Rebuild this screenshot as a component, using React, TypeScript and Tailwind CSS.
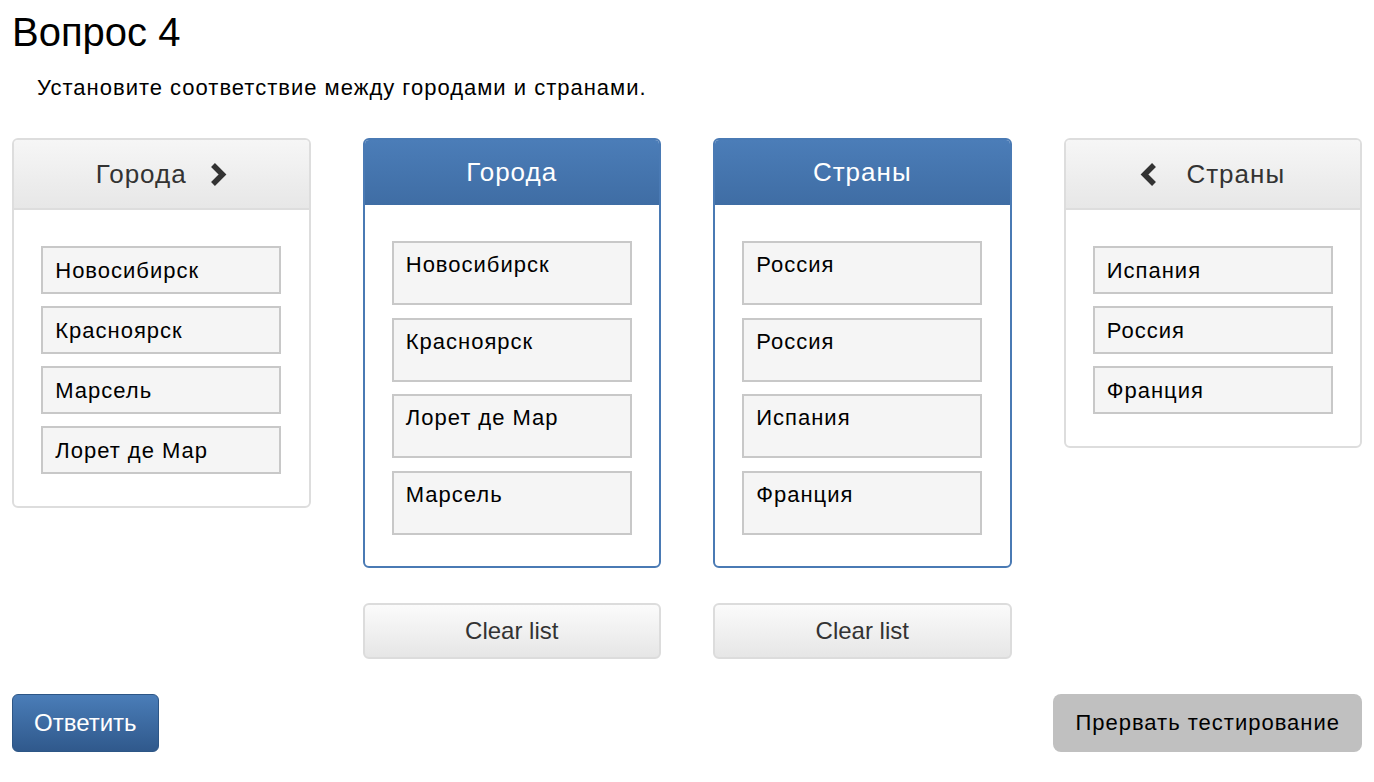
import React from 'react';

const sourceCities = ['Новосибирск', 'Красноярск', 'Марсель', 'Лорет де Мар'];
const pickedCities = ['Новосибирск', 'Красноярск', 'Лорет де Мар', 'Марсель'];
const pickedCountries = ['Россия', 'Россия', 'Испания', 'Франция'];
const sourceCountries = ['Испания', 'Россия', 'Франция'];

function Chevron({ dir }: { dir: 'left' | 'right' }) {
  const points = dir === 'right' ? '4,3 13.5,12.5 4,22' : '14,3 4.5,12.5 14,22';
  return (
    <svg width="18" height="25" viewBox="0 0 18 25" className="shrink-0">
      <polyline points={points} fill="none" stroke="#333" strokeWidth="5.5" strokeLinejoin="miter" />
    </svg>
  );
}

// список-источник (серый заголовок, короткие элементы)
function SourcePanel({ title, items, dir }: { title: string; items: string[]; dir: 'left' | 'right' }) {
  return (
    <div className="rounded-md border-2 border-[#dddddd] bg-white overflow-hidden">
      <div className="h-[70px] flex items-center justify-center bg-gradient-to-b from-[#f6f6f6] to-[#e7e7e7] border-b-2 border-[#dddddd] text-[26px] tracking-[1px] text-[#333]">
        {dir === 'left' && <span className="mr-[28px] flex"><Chevron dir="left" /></span>}
        <span>{title}</span>
        {dir === 'right' && <span className="ml-[22px] flex"><Chevron dir="right" /></span>}
      </div>
      <div className="flex flex-col items-center gap-[12px] pt-[36px] pb-[32px]">
        {items.map((item, i) => (
          <div key={i} className="w-[240px] h-[48px] border-2 border-[#c8c8c8] bg-[#f5f5f5] px-[12px] flex items-center text-[22px] tracking-[1px] text-black">
            {item}
          </div>
        ))}
      </div>
    </div>
  );
}

// целевой список (синий заголовок, высокие элементы)
function TargetPanel({ title, items }: { title: string; items: string[] }) {
  return (
    <div className="rounded-md border-2 border-[#4a7ab4] bg-white overflow-hidden">
      <div className="h-[65px] flex items-center justify-center bg-gradient-to-b from-[#4b7db8] to-[#3f6da4] text-[26px] tracking-[1px] text-white">
        {title}
      </div>
      <div className="flex flex-col items-center gap-[12.5px] pt-[36px] pb-[31px]">
        {items.map((item, i) => (
          <div key={i} className="w-[240px] h-[64px] border-2 border-[#c8c8c8] bg-[#f5f5f5] px-[12px] pt-[9px] text-[22px] leading-[26px] tracking-[1px] text-black">
            {item}
          </div>
        ))}
      </div>
    </div>
  );
}

function ClearButton() {
  return (
    <button className="h-[56px] w-full rounded-md border-2 border-[#dcdcdc] bg-gradient-to-b from-[#fbfbfb] to-[#e6e6e6] text-[24px] text-[#333]">
      Clear list
    </button>
  );
}

export default function App() {
  return (
    <div className="min-h-screen bg-white px-[12px] font-['Liberation_Sans',Arial,sans-serif]">
      <h1 className="pt-[8px] text-[40px] leading-[48px] text-black">Вопрос 4</h1>
      <p className="mt-[19px] pl-[25px] text-[22px] leading-[26px] tracking-[1px] text-black">
        Установите соответствие между городами и странами.
      </p>

      <div className="mt-[37px] grid grid-cols-4 gap-[52px] items-start">
        <SourcePanel title="Города" items={sourceCities} dir="right" />
        <div className="flex flex-col gap-[35px]">
          <TargetPanel title="Города" items={pickedCities} />
          <ClearButton />
        </div>
        <div className="flex flex-col gap-[35px]">
          <TargetPanel title="Страны" items={pickedCountries} />
          <ClearButton />
        </div>
        <SourcePanel title="Страны" items={sourceCountries} dir="left" />
      </div>

      <div className="mt-[35px] flex items-start justify-between">
        <button className="h-[58px] rounded-md border border-[#2d5686] bg-gradient-to-b from-[#4a7db8] to-[#30598c] px-[21px] text-[24px] text-white">
          Ответить
        </button>
        <button className="h-[58px] rounded-lg bg-[#c0c0c0] px-[22px] text-[22px] tracking-[1px] text-black">
          Прервать тестирование
        </button>
      </div>
    </div>
  );
}
